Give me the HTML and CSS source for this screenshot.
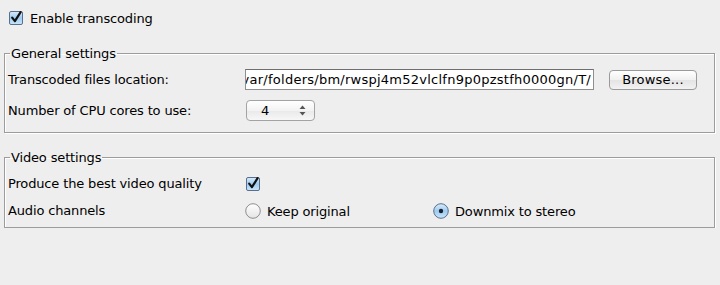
FILE: index.html
```html
<!DOCTYPE html>
<html lang="en">
  <head>
    <meta charset="utf-8">
    <title>Transcoding</title>
    <link rel="stylesheet" href="styles.css">
  </head>
  <body>
    <div class="top">
      <label class="check">
        <svg class="box" width="14" height="14" viewBox="0 0 14 14">
          <defs>
            <linearGradient id="blue" x1="0" y1="0" x2="0" y2="1">
              <stop offset="0" stop-color="#d9ecfb"/>
              <stop offset="0.5" stop-color="#9ecbf0"/>
              <stop offset="1" stop-color="#c9e6fb"/>
            </linearGradient>
          </defs>
          <rect x="0.5" y="0.5" width="13" height="13" rx="1.5" fill="url(#blue)" stroke="#5a6f8e"/>
          <path d="M3.2 6.6 L5.9 10.2 L11.6 1.2" fill="none" stroke="#111" stroke-width="2.2" stroke-linecap="round" stroke-linejoin="round"/>
        </svg>
        <span>Enable transcoding</span>
      </label>
    </div>

    <fieldset class="group general">
      <legend>General settings</legend>
      <div class="grid">
        <div class="label">Transcoded files location:</div>
        <div class="control">
          <div class="field"><span>/var/folders/bm/rwspj4m52vlclfn9p0pzstfh0000gn/T/</span></div>
          <div class="button">Browse...</div>
        </div>
        <div class="label">Number of CPU cores to use:</div>
        <div class="control">
          <div class="spinner">
            <span>4</span>
            <svg width="7" height="11" viewBox="0 0 7 11">
              <path d="M3.5 0.5 L6.5 4 L0.5 4 Z" fill="#555"/>
              <path d="M3.5 10.5 L6.5 7 L0.5 7 Z" fill="#555"/>
            </svg>
          </div>
        </div>
      </div>
    </fieldset>

    <fieldset class="group video">
      <legend>Video settings</legend>
      <div class="grid">
        <div class="label">Produce the best video quality</div>
        <div class="control">
          <svg class="box" width="14" height="14" viewBox="0 0 14 14">
            <rect x="0.5" y="0.5" width="13" height="13" rx="1.5" fill="url(#blue)" stroke="#5a6f8e"/>
            <path d="M3.2 6.6 L5.9 10.2 L11.6 1.2" fill="none" stroke="#111" stroke-width="2.2" stroke-linecap="round" stroke-linejoin="round"/>
          </svg>
        </div>
        <div class="label">Audio channels</div>
        <div class="control radios">
          <label class="radio keep">
            <svg width="16" height="16" viewBox="0 0 16 16">
              <defs>
                <linearGradient id="white" x1="0" y1="0" x2="0" y2="1">
                  <stop offset="0" stop-color="#ffffff"/>
                  <stop offset="1" stop-color="#e4e4e4"/>
                </linearGradient>
              </defs>
              <circle cx="8" cy="8" r="7.3" fill="url(#white)" stroke="#8e8e8e"/>
            </svg>
            <span>Keep original</span>
          </label>
          <label class="radio">
            <svg width="16" height="16" viewBox="0 0 16 16">
              <circle cx="8" cy="8" r="7.3" fill="url(#blue)" stroke="#5a6f8e"/>
              <circle cx="8" cy="8" r="2.2" fill="#1a2230"/>
            </svg>
            <span>Downmix to stereo</span>
          </label>
        </div>
      </div>
    </fieldset>
  </body>
</html>
```

FILE: styles.css
```css
body{
  margin: 0;
  background-color: #eeeeee;
  color: #000;
  font-family: "Lucida Grande", "DejaVu Sans", sans-serif;
  font-size: 13px;
  letter-spacing: -0.15px;
}
.top{
  padding: 8px 9px 0;
  height: 22px;
}
.check{
  display: flex;
  align-items: center;
  gap: 7px;
  height: 20px;
}
.box{
  display: block;
}
.group{
  margin: 16px 5px 0 4px;
  padding: 0 3px 0 3px;
  border: 1px solid #9c9c9c;
  box-shadow: 1px 1px 0 #fff, inset 1px 1px 0 #fff;
}
.group legend{
  padding: 0 1px;
  margin-left: 2px;
  line-height: 15px;
}
.video{
  margin-top: 17px;
}
.grid{
  display: grid;
  grid-template-columns: 237px 1fr;
  align-items: center;
}
.general .grid{
  padding: 8px 0 11px;
  row-gap: 10px;
}
.video .grid{
  padding: 11px 0 8px;
  row-gap: 11px;
}
.label{
  height: 16px;
  line-height: 16px;
}
.control{
  display: flex;
  align-items: center;
}
.field{
  width: 345px;
  height: 19px;
  border: 1px solid #8f8f8f;
  border-top-color: #6f6f6f;
  background: #fff;
  display: flex;
  justify-content: flex-end;
  align-items: center;
  overflow: hidden;
  white-space: nowrap;
  padding-right: 2px;
  letter-spacing: 0.25px;
}
.button{
  margin-left: 15px;
  width: 86px;
  height: 18px;
  line-height: 18px;
  text-align: center;
  border: 1px solid #9a9a9a;
  border-radius: 4px;
  background: linear-gradient(#ffffff, #f0f0f0 50%, #e4e4e4 51%, #f2f2f2);
  letter-spacing: 0.2px;
}
.spinner{
  margin-left: 1px;
  width: 69px;
  height: 21px;
  border: 1px solid #a3a3a3;
  border-radius: 4px;
  background: linear-gradient(#ffffff, #f3f3f3 50%, #e9e9e9 51%, #f7f7f7);
  display: flex;
  align-items: center;
  justify-content: space-between;
  padding: 0 8px 0 14px;
  box-sizing: border-box;
}
.video .control .box{
  margin-left: 1px;
}
.radio{
  display: flex;
  align-items: center;
  gap: 6px;
}
.radio svg{
  display: block;
}
.keep{
  width: 188px;
}
```
